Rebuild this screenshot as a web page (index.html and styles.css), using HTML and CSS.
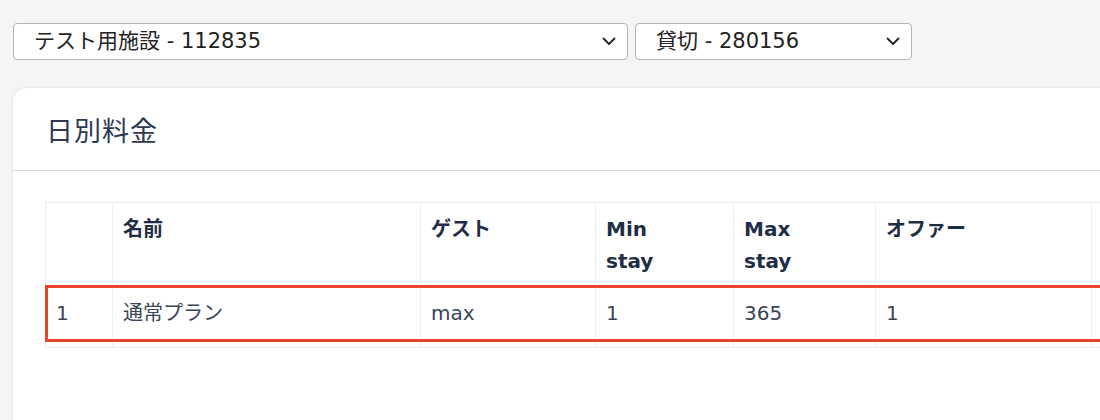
FILE: index.html
```html
<!DOCTYPE html>
<html lang="ja">
<head>
<meta charset="utf-8">
<title>日別料金</title>
<link rel="stylesheet" href="styles.css">
</head>
<body>
<div class="page">
  <div class="filters">
    <div class="select select-facility">
      <span class="select-text">テスト用施設 - 112835</span>
      <svg class="chev" width="14" height="9" viewBox="0 0 14 9"><path d="M1.5 1.5 L7 7 L12.5 1.5" fill="none" stroke="#222" stroke-width="1.8" stroke-linecap="round" stroke-linejoin="round"/></svg>
    </div>
    <div class="select select-room">
      <span class="select-text">貸切 - 280156</span>
      <svg class="chev" width="14" height="9" viewBox="0 0 14 9"><path d="M1.5 1.5 L7 7 L12.5 1.5" fill="none" stroke="#222" stroke-width="1.8" stroke-linecap="round" stroke-linejoin="round"/></svg>
    </div>
  </div>

  <div class="card">
    <div class="card-header">
      <h2 class="card-title">日別料金</h2>
    </div>
    <div class="card-body">
      <table class="rates">
        <colgroup>
          <col class="c-num">
          <col class="c-name">
          <col class="c-guest">
          <col class="c-min">
          <col class="c-max">
          <col class="c-offer">
          <col class="c-rest">
        </colgroup>
        <thead>
          <tr>
            <th></th>
            <th>名前</th>
            <th>ゲスト</th>
            <th>Min<br>stay</th>
            <th>Max<br>stay</th>
            <th>オファー</th>
            <th>Base<br>price</th>
          </tr>
        </thead>
        <tbody>
          <tr class="row">
            <td class="first"><span class="mark"></span>1</td>
            <td>通常プラン</td>
            <td>max</td>
            <td>1</td>
            <td>365</td>
            <td>1</td>
            <td></td>
          </tr>
        </tbody>
      </table>
    </div>
  </div>
</div>
</body>
</html>
```

FILE: styles.css
```css
html, body {
  margin: 0;
  padding: 0;
  background: #f5f5f5;
  overflow: hidden;
}

body {
  font-family: "DejaVu Sans", "Noto Sans CJK JP", sans-serif;
  width: 1100px;
  height: 420px;
}

.page {
  padding: 23px 0 0 13px;
}

.filters {
  display: flex;
  gap: 7px;
}

.select {
  box-sizing: border-box;
  height: 37px;
  background: #fff;
  border: 1px solid #b4b4b4;
  border-radius: 4px;
  display: flex;
  align-items: center;
  justify-content: space-between;
  padding: 0 11px 0 20px;
  font-size: 21px;
  color: #222;
}

.select-facility { width: 615px; }
.select-room { width: 277px; }

.select-text {
  line-height: 1;
}

.card {
  margin-top: 28px;
  width: 1400px;
  background: #fff;
  border-radius: 14px 14px 0 0;
  box-shadow: 0 0 3px rgba(0, 0, 0, 0.12);
  height: 400px;
}

.card-header {
  height: 82px;
  border-bottom: 1px solid #dcdcdc;
  display: flex;
  align-items: center;
  padding: 0 33px;
}

.card-title {
  margin: 0;
  font-size: 27px;
  font-weight: 400;
  color: #2e3a50;
  letter-spacing: 1px;
}

.card-body {
  padding: 31px 32px;
}

.rates {
  border-collapse: collapse;
  table-layout: fixed;
  width: 1200px;
  font-size: 20px;
  line-height: 32px;
}

.c-num { width: 67px; }
.c-name { width: 308px; }
.c-guest { width: 175px; }
.c-min { width: 138px; }
.c-max { width: 142px; }
.c-offer { width: 216px; }

.rates th,
.rates td {
  border: 1px solid #eceef2;
  text-align: left;
  vertical-align: top;
  padding: 10px 10px 9px;
}

.rates th {
  font-weight: 700;
  color: #1f2d45;
}

.rates td {
  color: #3a4558;
  padding-bottom: 18px;
}

.rates td.first {
  position: relative;
}

.mark {
  position: absolute;
  left: -1px;
  top: -2px;
  width: 1200px;
  height: 57px;
  box-sizing: border-box;
  border: 3px solid #e8452c;
}
```
